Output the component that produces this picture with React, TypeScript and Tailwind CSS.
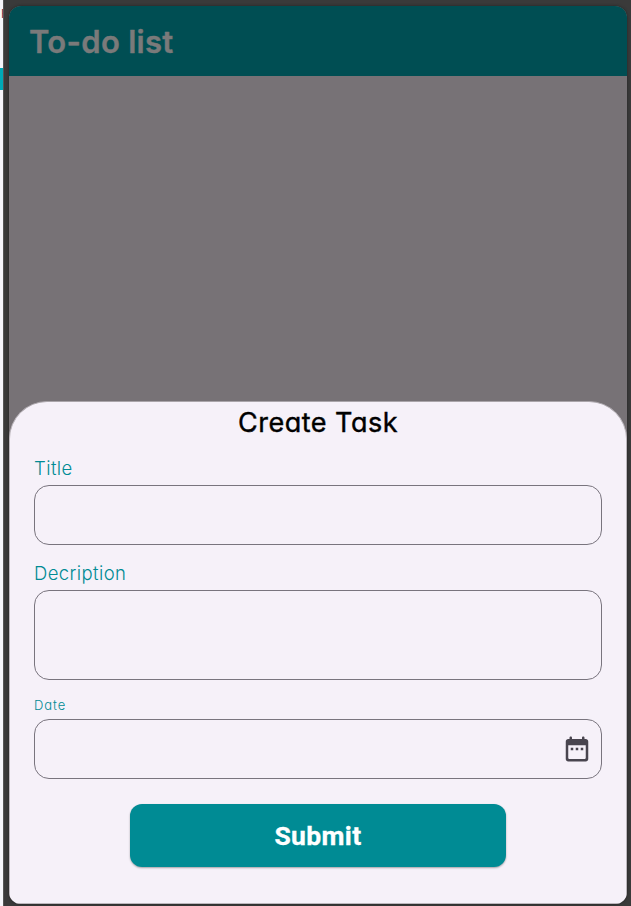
import React from "react";

const rounded = "font-['Inter','Open_Sans',sans-serif] [font-feature-settings:'cv11','ss03'] whitespace-nowrap";

function Label({ className, children }: { className: string; children: React.ReactNode }) {
  return <label className={`${rounded} block font-light text-[#008b94] ${className}`}>{children}</label>;
}

function CalendarIcon() {
  return (
    <svg viewBox="0 0 24 24" className="size-[30px] fill-[#49454f]">
      <path d="M7 11h2v2H7zm4 0h2v2h-2zm4 0h2v2h-2zM19 4h-1V3c0-.55-.45-1-1-1s-1 .45-1 1v1H8V3c0-.55-.45-1-1-1s-1 .45-1 1v1H5c-1.11 0-1.99.9-1.99 2L3 20c0 1.1.89 2 2 2h14c1.1 0 2-.9 2-2V6c0-1.100-.9-2-2-2zm0 15c0 .55-.45 1-1 1H6c-.55 0-1-.45-1-1V9h14z" />
    </svg>
  );
}

export default function App() {
  return (
    <div className="flex h-[906px] w-[631px] overflow-hidden bg-[#3a3a3a]">
      <div className="flex w-[3px] shrink-0 flex-col bg-[#f6f6fb]">
        <div className="mt-[6px] h-4 pl-px font-['Roboto',sans-serif] text-[13px] leading-4 text-[#71344d]">F</div>
        <div className="mt-[46px] h-[22px] bg-[#00a8b5]" />
      </div>
      <div className="relative w-[6px] shrink-0 border-l border-[#565656] bg-[#3a3a3a]" />
      <main className="relative mt-[6px] flex h-[898px] w-[618px] shrink-0 flex-col overflow-hidden rounded-[12px] bg-[#777276] shadow-[0_0_3px_#222]">
        <header className="flex h-[70px] shrink-0 items-center bg-[#004e53] pl-[20px]">
          <h1 className={`${rounded} pt-px text-[31px] font-semibold leading-10 tracking-[0.3px] text-[#7a7a7a] [-webkit-text-stroke:0.4px_#7a7a7a]`}>To-do list</h1>
        </header>
        <section className="mt-[325px] flex h-[503px] shrink-0 flex-col rounded-t-[38px] border border-[#bcb7bd] border-t-[#aaa5aa] bg-[#f6f1f9] px-[24px]">
          <h2 className={`${rounded} mt-[3px] text-center text-[27px] font-normal leading-9 tracking-[0.5px] text-black [-webkit-text-stroke:0.4px_black]`}>Create Task</h2>
          <Label className="mt-[16px] h-[28px] text-[18.5px] leading-[22px] tracking-[0.4px]">Title</Label>
          <div className="h-[60px] shrink-0 rounded-[15px] border border-[#79747e]" />
          <Label className="mt-[17px] h-[28px] text-[18.5px] leading-[22px] tracking-[0.4px]">Decription</Label>
          <div className="h-[90px] shrink-0 rounded-[15px] border border-[#79747e]" />
          <Label className="mt-[15px] h-[24px] text-[13px] leading-[20px] tracking-[0.9px]">Date</Label>
          <div className="flex h-[60px] shrink-0 items-center justify-end rounded-[15px] border border-[#79747e] pr-[9px]">
            <CalendarIcon />
          </div>
          <button className="mx-auto mt-[25px] h-[63px] w-[376px] shrink-0 rounded-[12px] bg-[#008b94] font-['Roboto',sans-serif] text-[26.5px] font-bold tracking-[0.35px] text-white shadow-[0_1px_2px_#0005] [-webkit-text-stroke:0.3px_white]">
            Submit
          </button>
        </section>
      </main>
    </div>
  );
}
